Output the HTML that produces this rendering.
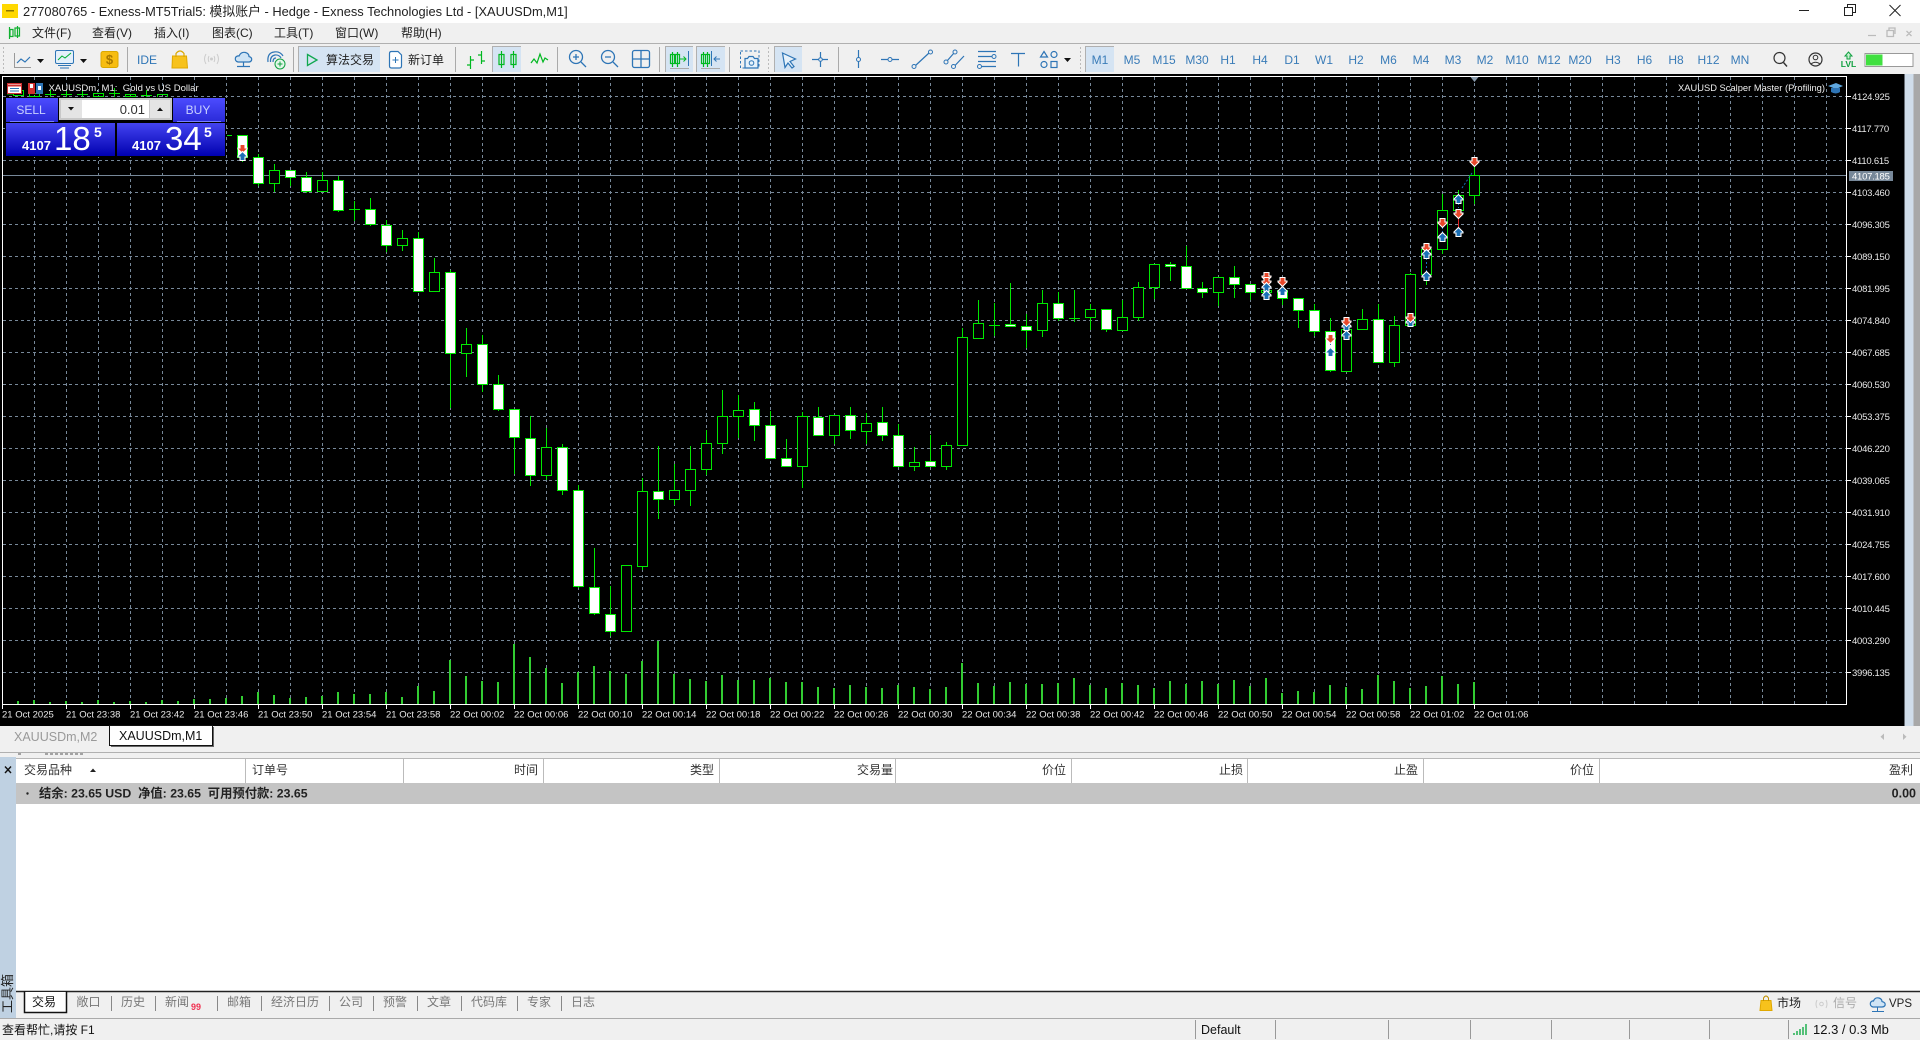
<!DOCTYPE html>
<html><head><meta charset="utf-8"><title>MT5</title>
<style>
html,body{margin:0;padding:0;width:1920px;height:1040px;overflow:hidden;background:#f0f0f0}
svg{display:block;position:absolute;left:0;top:0}
text{font-family:"Liberation Sans","Noto Sans CJK SC",sans-serif;white-space:pre}
.m{font-size:12px;fill:#222}
.tb{font-size:12px;fill:#222}
.tf{font-size:12px;fill:#3a7cb8;text-anchor:middle}
.t{font-size:9.5px;fill:#e8e8e8}
.p{font-size:9.5px;fill:#e8e8e8;letter-spacing:-.25px}
.h{font-size:12px;fill:#333}
.r{text-anchor:end}
.tab{font-size:12px;fill:#777;text-anchor:middle}
.ib{fill:none;stroke:#2e75b6;stroke-width:1.3}
.ig{fill:none;stroke:#00b820;stroke-width:1.3}
</style></head><body>
<svg width="1920" height="1040" viewBox="0 0 1920 1040" xmlns="http://www.w3.org/2000/svg">
<defs>
<linearGradient id="gb" x1="0" y1="0" x2="0" y2="1"><stop offset="0" stop-color="#4444f0"/><stop offset="1" stop-color="#0000b0"/></linearGradient>
<linearGradient id="gs" x1="0" y1="0" x2="0" y2="1"><stop offset="0" stop-color="#4c4cff"/><stop offset="1" stop-color="#2a2ad8"/></linearGradient>
<g id="d"><path d="M-2.500 -4.500H2.500V-1H4.500V0L0 4.500L-4.500 0V-1H-2.500Z" fill="#e8472a" stroke="#fff" stroke-width="1.100"/></g>
<g id="u"><path d="M-2.500 4.500H2.500V1H4.500V0L0 -4.500L-4.500 0V1H-2.500Z" fill="#1a6fb5" stroke="#fff" stroke-width="1.100"/></g>
</defs>

<!-- title bar -->
<rect x="0" y="0" width="1920" height="23" fill="#fff"/>
<rect x="2" y="4" width="16" height="14" fill="#ffd800"/>
<rect x="6" y="10" width="8" height="1.5" fill="#8a7500"/>
<text x="23" y="16" style="font-size:12.85px;fill:#222">277080765 - Exness-MT5Trial5: 模拟账户 - Hedge - Exness Technologies Ltd - [XAUUSDm,M1]</text>
<path d="M1799 10.5H1809" stroke="#222" fill="none"/>
<path d="M1844.5 7.5H1852.5V15.5H1844.5ZM1847.5 7V4.5H1855.5V12.5H1853" stroke="#222" fill="none"/>
<path d="M1889.5 5L1900.5 16M1900.5 5L1889.5 16" stroke="#222" fill="none"/>

<!-- menu bar -->
<rect x="0" y="23" width="1920" height="20" fill="#f0f0f0"/>
<path d="M9.5 27V39M10 29.5h3v7h-3zM17.5 26V38M15 28h4.5v8H15z" stroke="#10b030" fill="none" stroke-width="1.2"/>
<text x="32" y="37" class="m">文件(F)</text>
<text x="92" y="37" class="m">查看(V)</text>
<text x="154" y="37" class="m">插入(I)</text>
<text x="212" y="37" class="m">图表(C)</text>
<text x="274" y="37" class="m">工具(T)</text>
<text x="335" y="37" class="m">窗口(W)</text>
<text x="401" y="37" class="m">帮助(H)</text>
<path d="M1868 35.5H1876M1887 30.5H1893.5V36.5H1887ZM1889 30V28H1895V34M1906.5 31L1911.5 36M1911.5 31L1906.5 36" stroke="#bbb" fill="none" stroke-width="1.3"/>
<rect x="0" y="43" width="1920" height="1" fill="#b0b0b0"/>

<!-- toolbar -->
<rect x="0" y="44" width="1920" height="30" fill="#f0f0f0"/>
<path d="M3.5 47V72M768.5 47V72M1080.5 47V72" stroke="#bbb" stroke-dasharray="2 2" fill="none"/>
<path d="M127.5 47V72M293.5 47V72M455.5 47V72M557.5 47V72M659.5 47V72M729.5 47V72M838.5 47V72" stroke="#aaa" fill="none"/>
<g fill="#d5e4f3" stroke="none">
<rect x="298" y="46" width="82" height="26"/><rect x="492" y="46" width="29" height="26"/><rect x="665" y="46" width="28" height="26"/><rect x="696" y="46" width="29" height="26"/><rect x="774" y="46" width="28" height="26"/><rect x="1085" y="46" width="29" height="26"/>
</g>
<path d="M298.5 72V46.5H380M492.5 72V46.5H521M665.5 72V46.5H693M696.5 72V46.5H725M774.5 72V46.5H802M1085.5 72V46.5H1114" stroke="#b0b0b0" fill="none"/>
<path d="M14.5 53V67.5H31" stroke="#999" fill="none"/>
<path d="M17 63L21 59L25 62L30 57" stroke="#2e75b6" fill="none" stroke-width="1.2"/>
<path d="M37 59H44L40.5 63Z M80 59H87L83.5 63ZM1064 58H1071L1067.5 62Z" fill="#111"/>
<rect x="55.5" y="50.5" width="18" height="13" rx="1.5" fill="#e4f0fa" stroke="#2e75b6"/>
<path d="M58 60L62 56L65 58L71 53" stroke="#00b030" fill="none"/>
<path d="M58 65.5H71M60 68H69" stroke="#2e75b6" fill="none"/>
<rect x="101" y="51.5" width="17" height="16" rx="2" fill="#f7bd12" stroke="#dba800"/>
<text x="109.5" y="64" style="font-size:13px;font-weight:bold;fill:#a87800;text-anchor:middle">$</text>
<text x="147" y="64" style="font-size:12px;fill:#2e75b6;text-anchor:middle">IDE</text>
<path d="M172.500 56H186.500L187.500 68H172Z" fill="#f7c21c" stroke="#e0a800"/>
<path d="M176 57V53.500Q180 48.500 184 53.500V57" fill="none" stroke="#dba800" stroke-width="1.2"/>
<path d="M206 54Q203 59 206 64M209 56Q207.500 59 209 62M217 54Q220 59 217 64M214 56Q215.500 59 214 62" stroke="#ccc" fill="none"/>
<circle cx="211.500" cy="59" r="1.500" fill="#ccc"/>
<path d="M238 62Q234.500 61 235.500 57.500Q237 55.500 239 56Q241 51.500 245.500 52.500Q249 53.500 249 56.500Q252.500 57.500 251.500 60.500Q250.500 62 249 62Z" fill="#cfe4f5" stroke="#2e75b6" stroke-width="1.2"/>
<path d="M243.500 62V66M237 66.500H250" stroke="#2e75b6" fill="none" stroke-width="1.2"/>
<path d="M268 62Q267 53 274 52Q280 51 283 56M270.500 62Q270 56 275 55Q279 54.500 281 58M273 62Q273 58 276 58" stroke="#2e75b6" fill="none" stroke-width="1.2"/>
<circle cx="280" cy="64" r="5" fill="#e4f7ea" stroke="#10a040"/>
<path d="M277.500 64H282.500M280 61.500V66.500" stroke="#10a040"/>
<path d="M307.500 54.500L317 60L307.500 65.500Z" fill="none" stroke="#10a850" stroke-width="1.3"/>
<text x="326" y="64" class="tb">算法交易</text>
<path d="M389.500 53.500Q389.500 51.500 391.500 51.500H398L401.500 55V66Q401.500 68 399.500 68H391.500Q389.500 68 389.500 66Z" fill="#fff" stroke="#2e75b6" stroke-width="1.2"/>
<path d="M392.500 60H398.500M395.500 57V63" stroke="#2e75b6" fill="none"/>
<text x="408" y="64" class="tb">新订单</text>
<path d="M470.500 56V69M467 65H470.500M470.500 60H474M481.500 51V64M478 55H481.500M481.500 61H485" stroke="#00b820" fill="none" stroke-width="1.2"/>
<path d="M501.500 51V68M499 54.500h5v10h-5zM513.500 51V68M511 54.500h5v10h-5z" stroke="#00b820" fill="none" stroke-width="1.2"/>
<path d="M531 63L534 59L537 63L540 54L543 62L545 58L548 60" stroke="#00b820" fill="none" stroke-width="1.2"/>
<circle cx="576" cy="57" r="6.500" class="ib" fill="#e6f1fa"/><path d="M573 57H579M576 54V60M581 62L586 67" class="ib"/>
<circle cx="608" cy="57" r="6.500" class="ib" fill="#e6f1fa"/><path d="M605 57H611M613 62L618 67" class="ib"/>
<rect x="632.500" y="50.500" width="17" height="17" rx="2" class="ib"/><path d="M632.500 59H649.500M641 50.500V67.500" class="ib"/>
<path d="M672.500 52V67M670.500 54.500h4v9h-4zM677.500 52V67M675.500 54.500h4v9h-4z" stroke="#00b820" fill="none" stroke-width="1.200"/>
<path d="M680 59H686M683.500 56.500L686 59L683.500 61.500" stroke="#00b820" fill="none"/><path d="M688.500 51V66" stroke="#2e75b6"/><path d="M670 68.500H689M701 68.500H720" stroke="#aaa"/>
<path d="M703.500 52V67M701.500 54.500h4v9h-4zM707.500 52V67M705.500 54.500h4v9h-4z" stroke="#00b820" fill="none" stroke-width="1.200"/>
<path d="M711.500 51V66" stroke="#2e75b6"/><path d="M714 59H720M716.500 56.500L714 59L716.500 61.500" stroke="#2e75b6" fill="none"/>
<rect x="740.500" y="51" width="18.500" height="17" stroke="#2e75b6" fill="none" stroke-dasharray="2.500 2"/>
<path d="M745 58.500H747.500L749 56.500H753L754.500 58.500H758V68H745Z" fill="#e6f1fa" stroke="#2e75b6" stroke-width="1.200"/><circle cx="751.500" cy="63" r="2.300" fill="none" stroke="#2e75b6"/>
<path d="M782.500 53L795.500 59L790 61.500L794 66.500L792 68L788 63L785 67.500Z" fill="#e6f1fa" stroke="#2e75b6" stroke-width="1.200"/>
<path d="M812 59.500H828M820.500 52V67" stroke="#2e75b6" fill="none" stroke-width="1.200"/><circle cx="820.500" cy="59.500" r="1.800" fill="#f0f0f0" stroke="#2e75b6"/>
<path d="M858.500 50V68" stroke="#2e75b6" stroke-width="1.200"/><circle cx="858.500" cy="59.500" r="2" fill="#f0f0f0" stroke="#2e75b6"/>
<path d="M881 59.500H899" stroke="#2e75b6" stroke-width="1.200"/><circle cx="890" cy="59.500" r="2" fill="#f0f0f0" stroke="#2e75b6"/>
<path d="M915.500 65.500L929 53" stroke="#2e75b6" stroke-width="1.200"/><circle cx="914" cy="66.500" r="2" fill="#f0f0f0" stroke="#2e75b6"/><circle cx="930.500" cy="52" r="2" fill="#f0f0f0" stroke="#2e75b6"/>
<path d="M947 61L954 53M955 65.500L964 56" stroke="#2e75b6" stroke-width="1.200"/><circle cx="946" cy="62" r="2" fill="#f0f0f0" stroke="#2e75b6"/><circle cx="955" cy="52" r="2" fill="#f0f0f0" stroke="#2e75b6"/><circle cx="953.500" cy="66.500" r="2" fill="#f0f0f0" stroke="#2e75b6"/>
<path d="M978 51.500H996M978 56.500H993M978 61.500H996M981 66.500H996" stroke="#2e75b6" stroke-width="1.200"/><circle cx="994" cy="56.500" r="2" fill="#f0f0f0" stroke="#2e75b6"/><circle cx="979.500" cy="66.500" r="2" fill="#f0f0f0" stroke="#2e75b6"/>
<path d="M1011 53.500H1025M1018.500 53.500V66.500" stroke="#2e75b6" stroke-width="1.200"/>
<path d="M1044 51.500L1047.500 57H1040.500Z" fill="none" stroke="#2e75b6" stroke-width="1.200"/><circle cx="1054" cy="54.500" r="3" fill="none" stroke="#2e75b6" stroke-width="1.200"/><circle cx="1044" cy="64.500" r="3" fill="none" stroke="#2e75b6" stroke-width="1.200"/><rect x="1051" y="61.500" width="6" height="6" fill="none" stroke="#2e75b6" stroke-width="1.200"/>
<g>
<text x="1100" y="64" class="tf">M1</text><text x="1132" y="64" class="tf">M5</text><text x="1164" y="64" class="tf">M15</text><text x="1197" y="64" class="tf">M30</text><text x="1228" y="64" class="tf">H1</text><text x="1260" y="64" class="tf">H4</text><text x="1292" y="64" class="tf">D1</text><text x="1324" y="64" class="tf">W1</text><text x="1356" y="64" class="tf">H2</text><text x="1388.500" y="64" class="tf">M6</text><text x="1421" y="64" class="tf">M4</text><text x="1453" y="64" class="tf">M3</text><text x="1485" y="64" class="tf">M2</text><text x="1517" y="64" class="tf">M10</text><text x="1549" y="64" class="tf">M12</text><text x="1580" y="64" class="tf">M20</text><text x="1613" y="64" class="tf">H3</text><text x="1644.500" y="64" class="tf">H6</text><text x="1676" y="64" class="tf">H8</text><text x="1708.500" y="64" class="tf">H12</text><text x="1740" y="64" class="tf">MN</text>
</g>
<circle cx="1779.500" cy="58" r="5.500" fill="none" stroke="#333" stroke-width="1.200"/><path d="M1783.500 62.500L1787 66.500" stroke="#333" stroke-width="1.400"/>
<circle cx="1815.500" cy="59.500" r="6.500" fill="none" stroke="#333" stroke-width="1.200"/><circle cx="1815.500" cy="57.500" r="2.300" fill="none" stroke="#333"/><path d="M1811 64Q1815.500 60.500 1820 64" fill="none" stroke="#333"/>
<path d="M1848.500 52L1852 56H1850V59H1847V56H1845Z" fill="#c8f0d0" stroke="#10a040"/>
<text x="1848.500" y="67" style="font-size:8.500px;font-weight:bold;fill:#10a040;text-anchor:middle">LVL</text>
<rect x="1865" y="53.500" width="48" height="13" fill="#fff" stroke="#999"/><rect x="1866" y="54.500" width="16.500" height="11" fill="#40e040"/>

<!-- chart -->
<rect x="0" y="74" width="1904.500" height="652" fill="#000"/>
<rect x="1904.500" y="74" width="9" height="652" fill="#d0ddea"/>
<rect x="1913.500" y="74" width="6.500" height="652" fill="#a8a8a8"/>
<g stroke="#778899" fill="none" stroke-dasharray="3 3">
<path d="M3 96.500H1846M3 128.500H1846M3 160.500H1846M3 192.500H1846M3 224.500H1846M3 256.500H1846M3 288.500H1846M3 320.500H1846M3 352.500H1846M3 384.500H1846M3 416.500H1846M3 448.500H1846M3 480.500H1846M3 512.500H1846M3 544.500H1846M3 576.500H1846M3 608.500H1846M3 640.500H1846M3 672.500H1846"/>
<path d="M34.500 77V704M66.500 77V704M98.500 77V704M130.500 77V704M162.500 77V704M194.500 77V704M226.500 77V704M258.500 77V704M290.500 77V704M322.500 77V704M354.500 77V704M386.500 77V704M418.500 77V704M450.500 77V704M482.500 77V704M514.500 77V704M546.500 77V704M578.500 77V704M610.500 77V704M642.500 77V704M674.500 77V704M706.500 77V704M738.500 77V704M770.500 77V704M802.500 77V704M834.500 77V704M866.500 77V704M898.500 77V704M930.500 77V704M962.500 77V704M994.500 77V704M1026.500 77V704M1058.500 77V704M1090.500 77V704M1122.500 77V704M1154.500 77V704M1186.500 77V704M1218.500 77V704M1250.500 77V704M1282.500 77V704M1314.500 77V704M1346.500 77V704M1378.500 77V704M1410.500 77V704M1442.500 77V704M1474.500 77V704M1506.500 77V704M1538.500 77V704M1570.500 77V704M1602.500 77V704M1634.500 77V704M1666.500 77V704M1698.500 77V704M1730.500 77V704M1762.500 77V704M1794.500 77V704M1826.500 77V704"/>
</g>
<path d="M3 175.500H1846" stroke="#778899" fill="none"/>

<!-- volumes -->
<path stroke="#32cd32" stroke-width="2" fill="none" d="M18 701V704M34 700V704M50 702V704M66 701V704M82 702V704M98 700V704M114 702V704M130 701V704M146 702V704M162 700V704M178 701V704M194 699V704M210 699V704M226 698V704M242 696V704M258 692V704M274 695V704M290 698V704M306 697V704M322 696V704M338 692V704M354 694V704M370 694V704M386 692V704M402 697V704M418 686V704M434 691V704M450 660V704M466 676V704M482 681V704M498 682V704M514 644V704M530 657V704M546 668V704M562 683V704M578 672V704M594 666V704M610 671V704M626 674V704M642 661V704M658 641V704M674 674V704M690 679V704M706 681V704M722 675V704M738 680V704M754 680V704M770 678V704M786 682V704M802 682V704M818 687V704M834 688V704M850 685V704M866 687V704M882 688V704M898 685V704M914 687V704M930 689V704M946 687V704M962 663V704M978 683V704M994 686V704M1010 682V704M1026 684V704M1042 684V704M1058 683V704M1074 678V704M1090 685V704M1106 688V704M1122 683V704M1138 685V704M1154 688V704M1170 681V704M1186 684V704M1202 681V704M1218 684V704M1234 680V704M1250 686V704M1266 678V704M1282 693V704M1298 691V704M1314 692V704M1330 685V704M1346 687V704M1362 689V704M1378 675V704M1394 681V704M1410 688V704M1426 686V704M1442 676V704M1458 684V704M1474 682V704"/>

<!-- hidden-by-panel candles -->
<path stroke="#00e800" fill="none" d="M7 94H13M13.500 90.500h10v5h-10zM29.500 93.500h10v3h-10zM50.500 90V97M45 94.500H56M66.500 91V97M61 94.500H72M82.500 90V97M77 94.500H88M93.500 93.500h10v3h-10zM114.500 88V97M109 93.500H120M125.500 94.500h10v2h-10zM146.500 90V97M141 95.500H152M157.500 94.500h10v3h-10z"/>
<path d="M227 135.500H232" stroke="#00e800" fill="none"/>

<!-- wicks -->
<path stroke="#00e800" fill="none" d="M242.500 135V162M258.500 154V186M274.500 164V192M290.500 170V186M306.500 172V193M322.500 172V191M338.500 176V212M354.500 201V221M349 209.500H360M370.500 198V226M386.500 220V252M402.500 230V251M418.500 232V291M434.500 258V291M450.500 270V408M466.500 328V377M482.500 335V392M498.500 375V411M514.500 409V474M530.500 416V486M546.500 428V480M562.500 444V495M578.500 485V588M594.500 548V615M610.500 586V636M626.500 565V632M642.500 478V570M658.500 446V519M674.500 464V505M690.500 446V506M706.500 430V475M722.500 390V454M738.500 395V438M754.500 402V441M770.500 411V458M786.500 439V466M802.500 412V488M818.500 407V435M834.500 415V444M850.500 407V439M866.500 413V444M882.500 407V441M898.500 424V466M914.500 447V471M930.500 435V466M946.500 442V470M962.500 328V445M978.500 300V339M994.500 303V336M989 325.500H1000M1010.500 283V326M1026.500 314V348M1042.500 290V337M1058.500 292V321M1074.500 290V322M1069 318.500H1080M1090.500 304V330M1106.500 309V332M1122.500 300V330M1138.500 282V321M1154.500 264V299M1170.500 262V281M1186.500 246V288M1202.500 282V298M1218.500 277V306M1234.500 266V298M1250.500 284V300M1266.500 272V298M1282.500 278V305M1298.500 298V328M1314.500 304V336M1330.500 318V372M1346.500 317V372M1362.500 309V329M1378.500 304V362M1394.500 316V367M1410.500 273V325M1426.500 245V285M1442.500 194V254M1458.500 190V229M1474.500 158V204"/>
<!-- white bodies -->
<path fill="#fff" stroke="#00e800" d="M237.500 135.500h10v22h-10zM253.500 157.500h10v26h-10zM285.500 170.500h10v7h-10zM301.500 177.500h10v14h-10zM333.500 180.500h10v30h-10zM365.500 209.500h10v15h-10zM381.500 225.500h10v20h-10zM413.500 238.500h10v53h-10zM445.500 272.500h10v81h-10zM477.500 344.500h10v40h-10zM493.500 384.500h10v25h-10zM509.500 409.500h10v28h-10zM525.500 438.500h10v37h-10zM557.500 447.500h10v43h-10zM573.500 490.500h10v96h-10zM589.500 587.500h10v26h-10zM605.500 614.500h10v17h-10zM653.500 491.500h10v8h-10zM749.500 409.500h10v16h-10zM765.500 425.500h10v33h-10zM781.500 458.500h10v8h-10zM813.500 417.500h10v18h-10zM845.500 415.500h10v15h-10zM877.500 422.500h10v13h-10zM893.500 435.500h10v31h-10zM925.500 461.500h10v5h-10zM1005.500 324.500h10v2h-10zM1021.500 326.500h10v4h-10zM1053.500 303.500h10v15h-10zM1101.500 309.500h10v20h-10zM1165.500 264.500h10v2h-10zM1181.500 266.500h10v22h-10zM1197.500 288.500h10v4h-10zM1229.500 277.500h10v7h-10zM1245.500 284.500h10v8h-10zM1277.500 290.500h10v8h-10zM1293.500 298.500h10v12h-10zM1309.500 310.500h10v21h-10zM1325.500 331.500h10v39h-10zM1373.500 319.500h10v43h-10z"/>
<!-- black bodies -->
<path fill="#000" stroke="#00e800" d="M269.500 170.500h10v13h-10zM317.500 180.500h10v11h-10zM397.500 238.500h10v7h-10zM429.500 272.500h10v19h-10zM461.500 344.500h10v9h-10zM541.500 447.500h10v28h-10zM621.500 565.500h10v66h-10zM637.500 491.500h10v75h-10zM669.500 490.500h10v9h-10zM685.500 469.500h10v21h-10zM701.500 443.500h10v26h-10zM717.500 416.500h10v27h-10zM733.500 410.500h10v6h-10zM797.500 416.500h10v50h-10zM829.500 415.500h10v20h-10zM861.500 423.500h10v8h-10zM909.500 462.500h10v4h-10zM941.500 445.500h10v21h-10zM957.500 337.500h10v108h-10zM973.500 323.500h10v15h-10zM1037.500 303.500h10v27h-10zM1085.500 309.500h10v8h-10zM1117.500 317.500h10v13h-10zM1133.500 287.500h10v30h-10zM1149.500 264.500h10v23h-10zM1213.500 277.500h10v15h-10zM1261.500 290.500h10v2h-10zM1341.500 329.500h10v42h-10zM1357.500 319.500h10v10h-10zM1389.500 325.500h10v37h-10zM1405.500 274.500h10v51h-10zM1421.500 249.500h10v25h-10zM1437.500 210.500h10v39h-10zM1453.500 195.500h10v15h-10zM1469.500 175.500h10v20h-10z"/>
<!-- arrows -->
<path d="M1458.500 216V230" stroke="#e02020"/>
<path d="M1282.500 285V289M1330.500 343V348M1346.500 330V332M1426.500 258V272M1442.500 227V232M1458.500 203V208M1462 188L1472 173" stroke="#1a6fb5" stroke-dasharray="2 2" fill="none"/>
<use href="#d" x="242.500" y="149"/><use href="#u" x="242.500" y="156"/>
<use href="#d" x="1266.500" y="277"/><use href="#d" x="1266.500" y="282"/><use href="#u" x="1266.500" y="287"/><use href="#u" x="1266.500" y="295"/>
<use href="#d" x="1282.500" y="282"/><use href="#u" x="1282.500" y="291"/>
<use href="#d" x="1330.500" y="339"/><use href="#u" x="1330.500" y="352"/>
<use href="#u" x="1346.500" y="326"/><use href="#d" x="1346.500" y="322"/><use href="#u" x="1346.500" y="335"/>
<use href="#u" x="1410.500" y="322"/><use href="#d" x="1410.500" y="318"/>
<use href="#d" x="1426.500" y="248"/><use href="#u" x="1426.500" y="254"/><use href="#u" x="1426.500" y="276"/>
<use href="#d" x="1442.500" y="223"/><use href="#u" x="1442.500" y="237"/>
<use href="#u" x="1458.500" y="199"/><use href="#d" x="1458.500" y="214"/><use href="#u" x="1458.500" y="232"/>
<use href="#d" x="1474.500" y="162"/>
<path d="M1470.500 77H1478.500L1474.500 82Z" fill="#8899aa"/>

<!-- chart frame -->
<path d="M2.500 704.500V76.500H1846.500V704.500H2.500" stroke="#fff" fill="none"/>
<path d="M2.500 704V709M66.500 704V709M130.500 704V709M194.500 704V709M258.500 704V709M322.500 704V709M386.500 704V709M450.500 704V709M514.500 704V709M578.500 704V709M642.500 704V709M706.500 704V709M770.500 704V709M834.500 704V709M898.500 704V709M962.500 704V709M1026.500 704V709M1090.500 704V709M1154.500 704V709M1218.500 704V709M1282.500 704V709M1346.500 704V709M1410.500 704V709M1474.500 704V709" stroke="#fff" fill="none"/>
<path d="M1846 96.500H1851M1846 128.500H1851M1846 160.500H1851M1846 192.500H1851M1846 224.500H1851M1846 256.500H1851M1846 288.500H1851M1846 320.500H1851M1846 352.500H1851M1846 384.500H1851M1846 416.500H1851M1846 448.500H1851M1846 480.500H1851M1846 512.500H1851M1846 544.500H1851M1846 576.500H1851M1846 608.500H1851M1846 640.500H1851M1846 672.500H1851" stroke="#fff" fill="none"/>
<g class="pl">
<text class="p" x="1852" y="100">4124.925</text><text class="p" x="1852" y="132">4117.770</text><text class="p" x="1852" y="164">4110.615</text><text class="p" x="1852" y="196">4103.460</text><text class="p" x="1852" y="228">4096.305</text><text class="p" x="1852" y="260">4089.150</text><text class="p" x="1852" y="292">4081.995</text><text class="p" x="1852" y="324">4074.840</text><text class="p" x="1852" y="356">4067.685</text><text class="p" x="1852" y="388">4060.530</text><text class="p" x="1852" y="420">4053.375</text><text class="p" x="1852" y="452">4046.220</text><text class="p" x="1852" y="484">4039.065</text><text class="p" x="1852" y="516">4031.910</text><text class="p" x="1852" y="548">4024.755</text><text class="p" x="1852" y="580">4017.600</text><text class="p" x="1852" y="612">4010.445</text><text class="p" x="1852" y="644">4003.290</text><text class="p" x="1852" y="676">3996.135</text>
</g>
<rect x="1849" y="171" width="44" height="10" fill="#778899"/>
<text class="p" x="1852" y="179.500" style="fill:#fff">4107.185</text>
<g>
<text class="t" x="2" y="717.500">21 Oct 2025</text><text class="t" x="66" y="717.500">21 Oct 23:38</text><text class="t" x="130" y="717.500">21 Oct 23:42</text><text class="t" x="194" y="717.500">21 Oct 23:46</text><text class="t" x="258" y="717.500">21 Oct 23:50</text><text class="t" x="322" y="717.500">21 Oct 23:54</text><text class="t" x="386" y="717.500">21 Oct 23:58</text><text class="t" x="450" y="717.500">22 Oct 00:02</text><text class="t" x="514" y="717.500">22 Oct 00:06</text><text class="t" x="578" y="717.500">22 Oct 00:10</text><text class="t" x="642" y="717.500">22 Oct 00:14</text><text class="t" x="706" y="717.500">22 Oct 00:18</text><text class="t" x="770" y="717.500">22 Oct 00:22</text><text class="t" x="834" y="717.500">22 Oct 00:26</text><text class="t" x="898" y="717.500">22 Oct 00:30</text><text class="t" x="962" y="717.500">22 Oct 00:34</text><text class="t" x="1026" y="717.500">22 Oct 00:38</text><text class="t" x="1090" y="717.500">22 Oct 00:42</text><text class="t" x="1154" y="717.500">22 Oct 00:46</text><text class="t" x="1218" y="717.500">22 Oct 00:50</text><text class="t" x="1282" y="717.500">22 Oct 00:54</text><text class="t" x="1346" y="717.500">22 Oct 00:58</text><text class="t" x="1410" y="717.500">22 Oct 01:02</text><text class="t" x="1474" y="717.500">22 Oct 01:06</text>
</g>

<!-- chart legend -->
<rect x="7.500" y="83.500" width="14" height="10" fill="#fff" stroke="#d03030"/><path d="M8 85.500H21" stroke="#d03030" stroke-width="2"/><path d="M10 88.500H19M10 91H19" stroke="#2e75b6"/>
<rect x="28" y="83" width="7" height="11" fill="#d03030"/><rect x="36" y="83" width="7" height="11" fill="#2e75b6"/><rect x="30" y="84" width="3" height="4" fill="#fff"/><rect x="38" y="86" width="3" height="4" fill="#fff"/>
<text x="48.500" y="91" style="font-size:9.550px;fill:#eee">XAUUSDm, M1:  Gold vs US Dollar</text>
<text x="1678" y="91" style="font-size:9.350px;fill:#eee">XAUUSD Scalper Master (Profiling)</text>
<path d="M1828 86L1836 83L1843 86L1836 89Z" fill="#5fa8e0"/><path d="M1831 88V92Q1836 95 1840 92V88" fill="#2e75b6"/>

<!-- trade panel -->
<rect x="5" y="97" width="221" height="60" fill="#000"/>
<rect x="6" y="98" width="52" height="24" fill="url(#gs)"/>
<rect x="173" y="98" width="52" height="24" fill="url(#gs)"/>
<text x="31" y="114" style="font-size:12px;fill:#c8d0ff;text-anchor:middle">SELL</text>
<text x="198" y="114" style="font-size:12px;fill:#c8d0ff;text-anchor:middle">BUY</text>
<path d="M10 121.500H54M177 121.500H221" stroke="#7a80ff"/>
<rect x="6" y="123" width="109" height="33" fill="url(#gb)"/>
<rect x="117" y="123" width="108" height="33" fill="url(#gb)"/>
<text x="22" y="150" style="font-size:13px;font-weight:bold;fill:#fff">4107</text>
<text x="54" y="150" style="font-size:33px;fill:#fff">18</text>
<text x="94" y="137" style="font-size:14px;font-weight:bold;fill:#fff">5</text>
<text x="132" y="150" style="font-size:13px;font-weight:bold;fill:#fff">4107</text>
<text x="165" y="150" style="font-size:33px;fill:#fff">34</text>
<text x="204" y="137" style="font-size:14px;font-weight:bold;fill:#fff">5</text>
<rect x="59" y="98" width="113" height="22" fill="#c8c8c8"/>
<rect x="61" y="100" width="21" height="18" fill="#e4e4e4"/><rect x="82" y="100" width="67" height="18" fill="#fff"/><rect x="150" y="100" width="20" height="18" fill="#e4e4e4"/>
<path d="M68 107H74L71 110.500ZM157 111H163L160 107.500Z" fill="#111"/>
<text x="145" y="114" style="font-size:13px;fill:#333;text-anchor:end">0.01</text>

<!-- tabs under chart -->
<rect x="0" y="726" width="1920" height="33" fill="#f0f0f0"/>
<rect x="109.500" y="725.500" width="103" height="20" fill="#fff" stroke="#111"/>
<path d="M213.500 727V746.500H111" stroke="#666" fill="none"/>
<text x="14" y="741" style="font-size:12.500px;fill:#999">XAUUSDm,M2</text>
<text x="119" y="740" style="font-size:12.500px;fill:#111">XAUUSDm,M1</text>
<path d="M1884 733.500V740L1880.500 736.800ZM1903 733.500V740L1906.500 736.800Z" fill="#bbb"/>
<path d="M0 752.500H1920" stroke="#b0b0b0"/>
<path d="M18 754H22M45 754H85" stroke="#555" stroke-dasharray="3 2"/>

<!-- toolbox -->
<rect x="0" y="757" width="16" height="262" fill="#bfd1e2"/>
<rect x="16" y="759" width="1904" height="232" fill="#fff"/>
<path d="M16 758.500H1920" stroke="#b8b8b8"/>
<path d="M5 766.500L11 773M11 766.500L5 773" stroke="#111" stroke-width="1.400"/>
<path d="M245.500 759V783M403.500 759V783M543.500 759V783M719.500 759V783M895.500 759V783M1071.500 759V783M1247.500 759V783M1423.500 759V783M1599.500 759V783" stroke="#bbb"/>
<text x="24" y="774" class="h">交易品种</text>
<path d="M90 772H96L93 768.500Z" fill="#222"/>
<text x="252" y="774" class="h">订单号</text>
<text x="538" y="774" class="h r">时间</text>
<text x="714" y="774" class="h r">类型</text>
<text x="893" y="774" class="h r">交易量</text>
<text x="1066" y="774" class="h r">价位</text>
<text x="1243" y="774" class="h r">止损</text>
<text x="1418" y="774" class="h r">止盈</text>
<text x="1594" y="774" class="h r">价位</text>
<text x="1913" y="774" class="h r">盈利</text>
<rect x="16" y="783" width="1904" height="21" fill="#c4c4c4"/>
<circle cx="27.500" cy="793.500" r="1.200" fill="#222"/>
<text x="39" y="797.500" style="font-size:12.300px;font-weight:bold;fill:#222">结余: 23.65 USD  净值: 23.65  可用预付款: 23.65</text>
<text x="1916" y="797.500" style="font-size:12.500px;font-weight:bold;fill:#222;text-anchor:end">0.00</text>

<!-- bottom tabs -->
<rect x="16" y="991" width="1904" height="27" fill="#f0f0f0"/>
<path d="M16 991.500H1920" stroke="#222" stroke-width="1.500"/>
<path d="M0 1018.500H1920" stroke="#aaa"/>
<path d="M24 992H66V1012H24Z" fill="#fff"/>
<path d="M24.500 991V1012.500H66.500V991" stroke="#111" stroke-width="1.500" fill="none"/>
<text x="44" y="1006" style="font-size:12px;fill:#111;text-anchor:middle">交易</text>
<text x="88.500" y="1006" class="tab">敞口</text>
<text x="133" y="1006" class="tab">历史</text>
<text x="177" y="1006" class="tab">新闻</text>
<text x="196" y="1010" style="font-size:9px;font-weight:bold;fill:#f03050;text-anchor:middle">99</text>
<text x="239" y="1006" class="tab">邮箱</text>
<text x="295" y="1006" class="tab">经济日历</text>
<text x="351" y="1006" class="tab">公司</text>
<text x="395" y="1006" class="tab">预警</text>
<text x="439" y="1006" class="tab">文章</text>
<text x="489" y="1006" class="tab">代码库</text>
<text x="539" y="1006" class="tab">专家</text>
<text x="583" y="1006" class="tab">日志</text>
<path d="M111.500 996V1011M155.500 996V1011M217.500 996V1011M261.500 996V1011M329.500 996V1011M373.500 996V1011M417.500 996V1011M461.500 996V1011M517.500 996V1011M561.500 996V1011" stroke="#888"/>
<text transform="translate(12,1013) rotate(-90)" style="font-size:13px;fill:#222">工具箱</text>

<path d="M1761 1000.500H1771L1772 1010.500H1760Z" fill="#f7c21c" stroke="#e0a800"/><path d="M1763.500 1001V998Q1766 994 1768.500 998V1001" fill="none" stroke="#c09000"/>
<text x="1777" y="1007" style="font-size:12px;fill:#222">市场</text>
<path d="M1817 1000Q1815 1004 1817 1008M1826 1000Q1828 1004 1826 1008" stroke="#ccc" fill="none"/><circle cx="1821.500" cy="1004" r="1.800" fill="none" stroke="#ccc"/>
<text x="1833" y="1007" style="font-size:12px;fill:#aaa">信号</text>
<path d="M1873 1007Q1869.500 1006 1870.500 1002.500Q1872 1000.500 1873.500 1001Q1875 997 1879 998Q1882 999 1882 1001.500Q1886 1002.500 1885 1005.500Q1884 1007 1882 1007Z" fill="#cfe4f5" stroke="#2e75b6" stroke-width="1.200"/><path d="M1877.500 1007V1011M1872 1011.500H1884" stroke="#2e75b6"/>
<text x="1889" y="1007" style="font-size:11.500px;fill:#222">VPS</text>

<!-- status -->
<text x="2" y="1034" style="font-size:12px;fill:#111">查看帮忙,请按 F1</text>
<text x="1201" y="1034" style="font-size:12.500px;fill:#111">Default</text>
<path d="M1195.500 1020V1039M1275.500 1020V1039M1388.500 1020V1039M1470.500 1020V1039M1551.500 1020V1039M1629.500 1020V1039M1709.500 1020V1039M1788.500 1020V1039" stroke="#999"/>
<path d="M1794 1035V1033M1797 1035V1031M1800 1035V1029M1803 1035V1027M1806 1035V1024" stroke="#20b050" stroke-width="1.500"/>
<text x="1813" y="1034" style="font-size:13px;fill:#111">12.3 / 0.3 Mb</text>
</svg>
</body></html>
